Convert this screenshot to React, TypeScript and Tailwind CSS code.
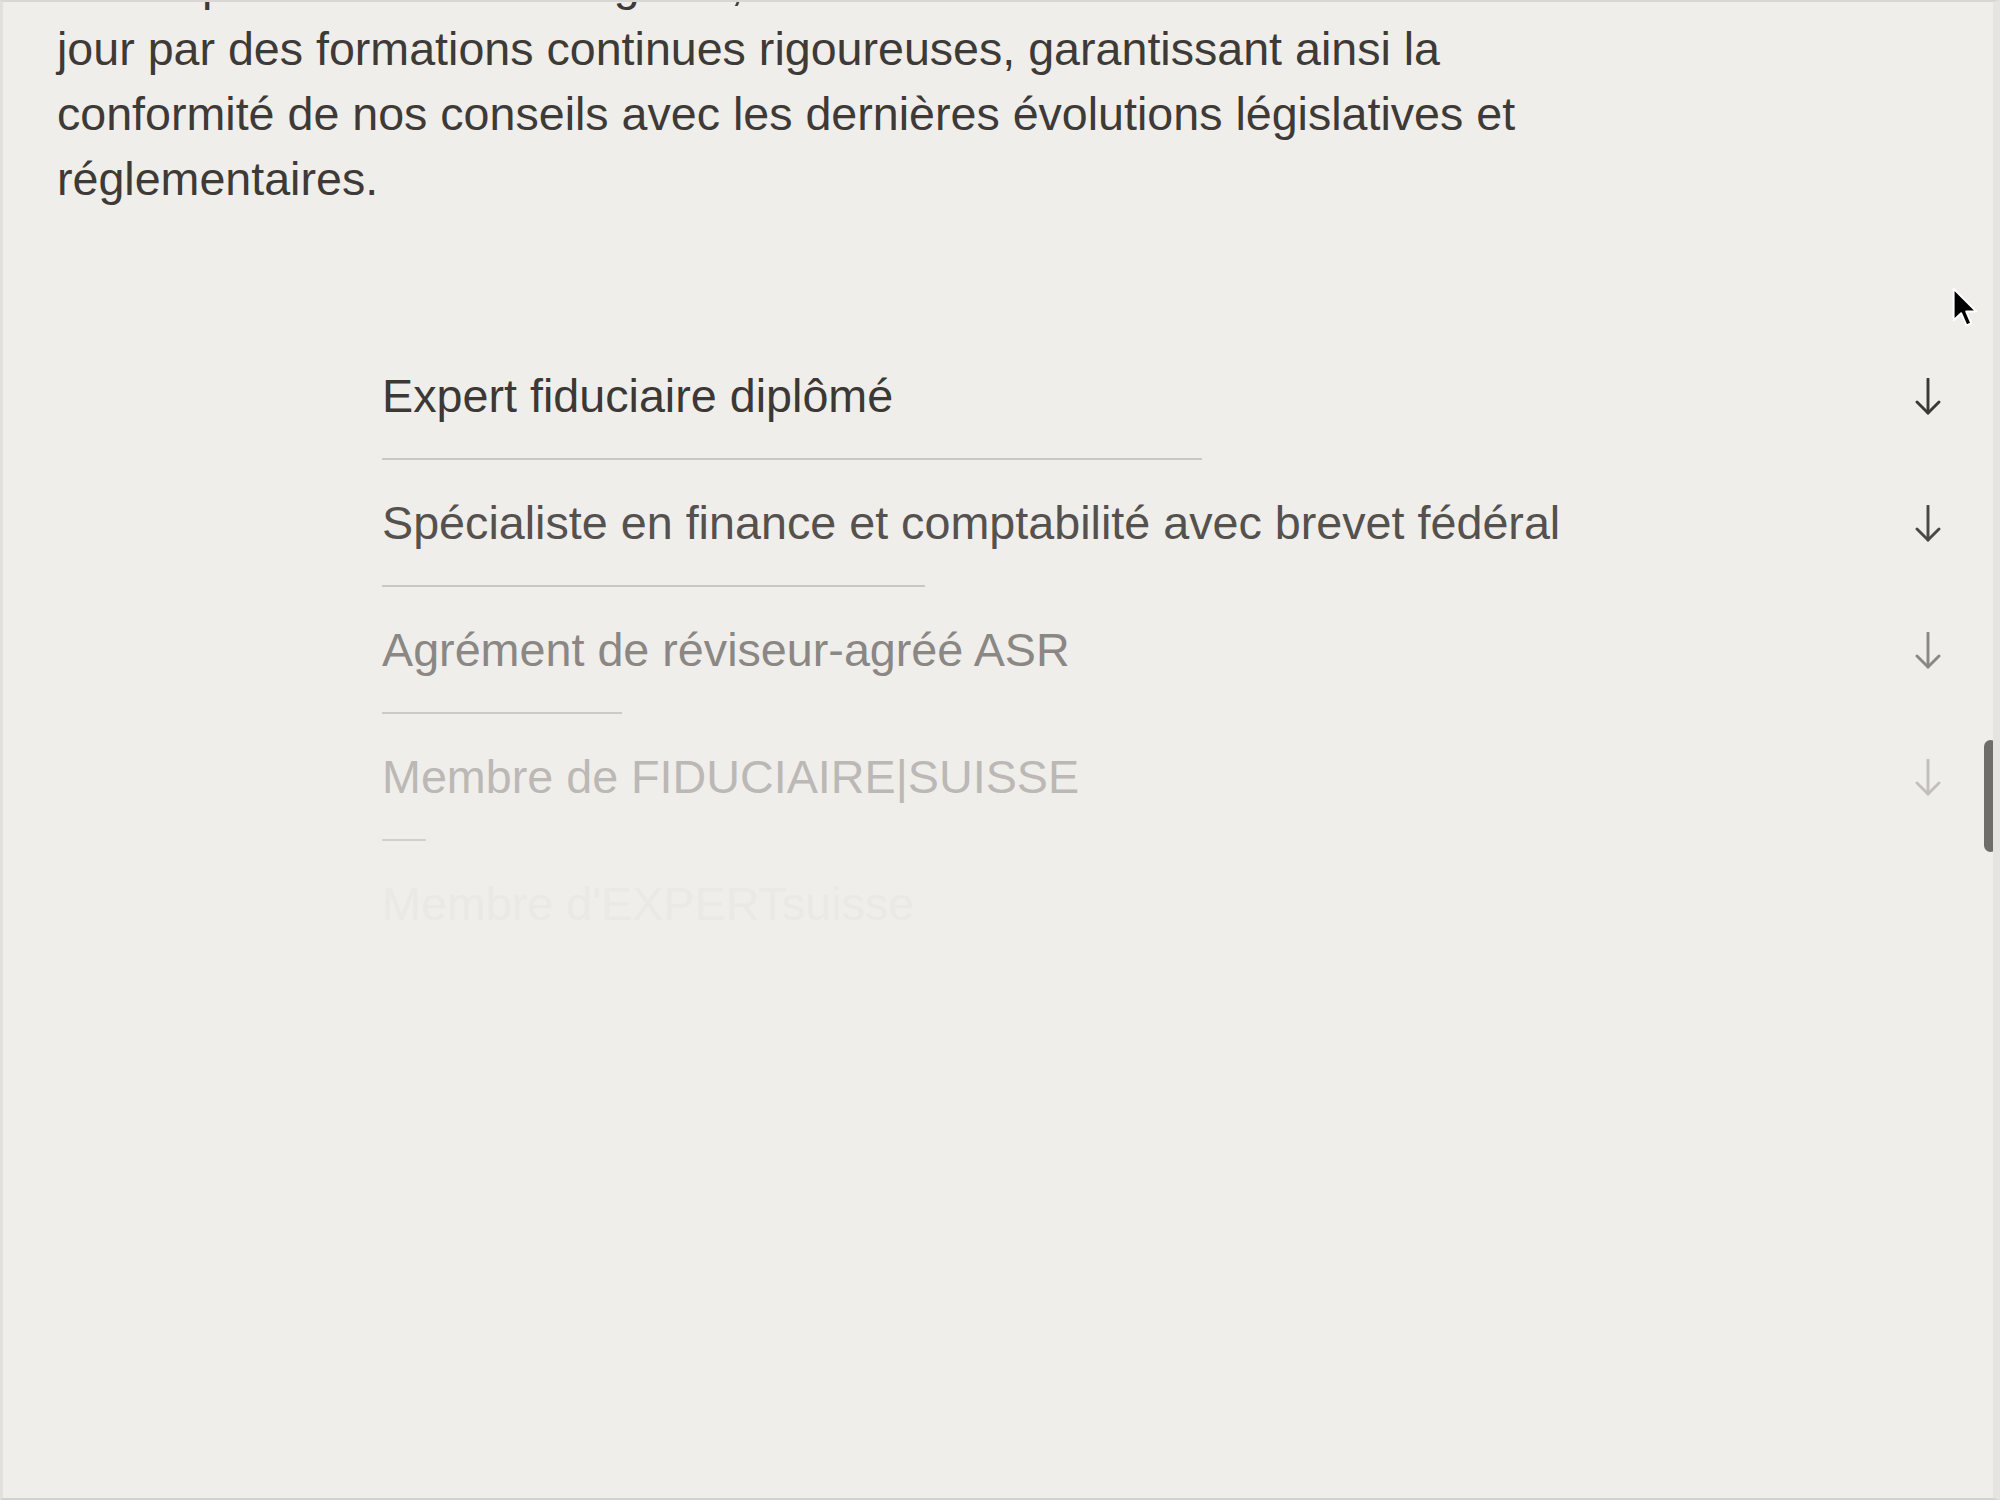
import React from "react";

type Row = {
  title: string;
  text: string;
  arrow: string;
  line: string;
  lineW: string;
};

const rows: Row[] = [
  { title: "Expert fiduciaire diplômé", text: "text-[#3b3835]", arrow: "#3b3835", line: "bg-[#cbc8c4]", lineW: "w-[820px]" },
  { title: "Spécialiste en finance et comptabilité avec brevet fédéral", text: "text-[#55514e]", arrow: "#4a4744", line: "bg-[#cbc8c4]", lineW: "w-[543px]" },
  { title: "Agrément de réviseur-agréé ASR", text: "text-[#8a8784]", arrow: "#8a8784", line: "bg-[#cdcac6]", lineW: "w-[240px]" },
  { title: "Membre de FIDUCIAIRE|SUISSE", text: "text-[#bbb8b5]", arrow: "#c2bfbc", line: "bg-[#d3d0cc]", lineW: "w-[44px]" },
  { title: "Membre d'EXPERTsuisse", text: "text-[#ebe9e6]", arrow: "#f0eeeb", line: "bg-[#f0eeeb]", lineW: "w-[0px]" },
];

function ArrowDown({ color }: { color: string }) {
  return (
    <svg width="26" height="37" viewBox="0 0 26 37" fill="none">
      <path d="M13 1 V35" stroke={color} strokeWidth="2.9" strokeLinecap="round" />
      <path d="M2 24 L13 35 L24 24" stroke={color} strokeWidth="2.9" strokeLinecap="round" strokeLinejoin="round" />
    </svg>
  );
}

export default function App() {
  return (
    <div
      className="relative h-[1500px] w-[2000px] overflow-hidden border-t-[2px] border-b-[2px] border-l-[3px] border-r-[7px] border-t-[#d9d7d4] border-b-[#d3d1ce] border-l-[#e2e0dd] border-r-[#e6e4e1] bg-[#f0eeeb]"
      style={{ fontFamily: '"Liberation Sans", Arial, sans-serif' }}
    >
      <p className="-mt-[50px] pl-[54px] text-[46.6px] leading-[65px] text-[#3d3a37]">
        <span className="block whitespace-nowrap">Nos experts sont dûment agréés, et leurs connaissances sont tenues à</span>
        <span className="block whitespace-nowrap">jour par des formations continues rigoureuses, garantissant ainsi la</span>
        <span className="block whitespace-nowrap">conformité de nos conseils avec les dernières évolutions législatives et</span>
        <span className="block whitespace-nowrap">réglementaires.</span>
      </p>

      <div className="mt-[121px] ml-[379px] w-[1559px]">
        {rows.map((r) => (
          <div key={r.title} className="flex flex-col">
            <div className="flex items-center justify-between pt-[40px] pb-[38px]">
              <span className={`text-[46.7px] leading-[47px] whitespace-nowrap ${r.text}`}>{r.title}</span>
              <ArrowDown color={r.arrow} />
            </div>
            <div className={`h-[2px] ${r.lineW} ${r.line}`} />
          </div>
        ))}
      </div>

      {/* scrollbar overlay */}
      <div className="absolute right-[-4px] top-[738px] h-[112px] w-[13px] rounded-full bg-[#6f6d6a]" />

      {/* mouse cursor */}
      <svg className="absolute left-[1948px] top-[285px]" width="28" height="42" viewBox="0 0 16 24">
        <path
          d="M1.5 1 L1.5 19 L5.8 15 L8.8 22 L11.6 20.8 L8.7 14 L14.5 14 Z"
          fill="#000"
          stroke="#fff"
          strokeWidth="1.1"
          strokeLinejoin="round"
        />
      </svg>
    </div>
  );
}
